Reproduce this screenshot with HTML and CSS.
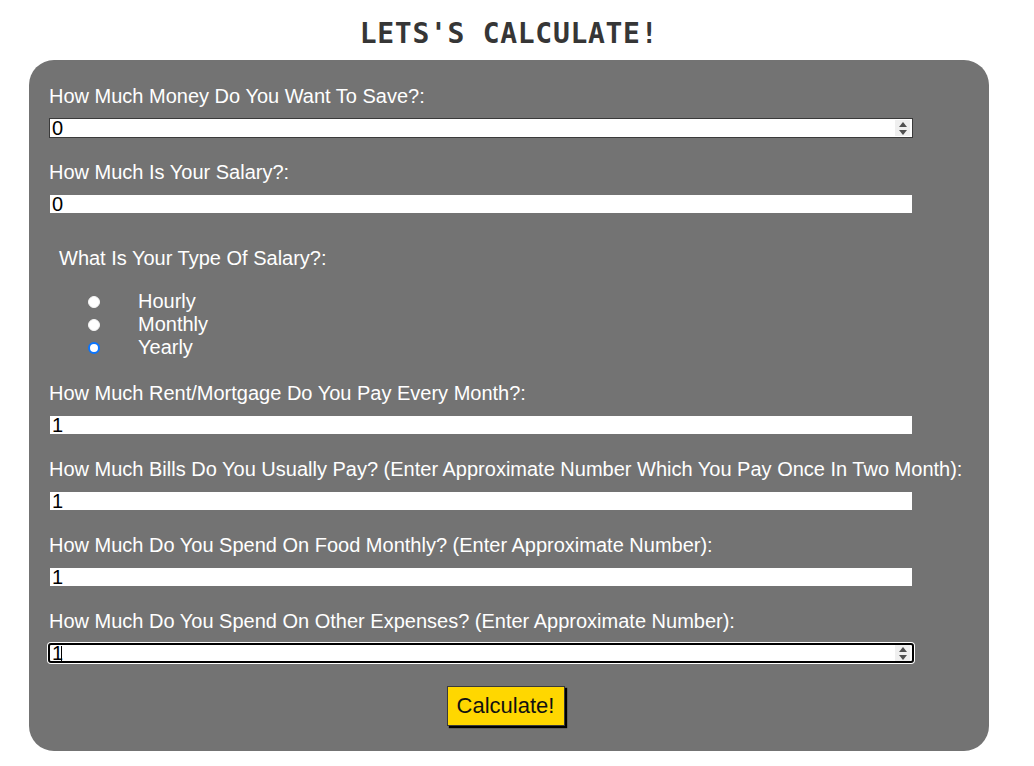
FILE: index.html
```html
<!DOCTYPE html>
<html lang="en">
<head>
<meta charset="utf-8">
<title>Lets's Calculate!</title>
<link rel="stylesheet" href="styles.css">
</head>
<body>
<div class="page">
  <h1 class="title">LETS'S CALCULATE!</h1>
  <form class="panel">
    <label class="field-label" for="save">How Much Money Do You Want To Save?:</label>
    <div class="input-wrap">
      <input class="field hovered" id="save" type="text" value="0">
      <span class="spinner"><span class="tri up"></span><span class="tri down"></span></span>
    </div>

    <label class="field-label" for="salary">How Much Is Your Salary?:</label>
    <div class="input-wrap">
      <input class="field" id="salary" type="text" value="0">
    </div>

    <div class="radio-group">
      <p class="group-title">What Is Your Type Of Salary?:</p>
      <ul class="radio-list">
        <li><input class="radio" type="radio" name="type" id="hourly"><label for="hourly">Hourly</label></li>
        <li><input class="radio" type="radio" name="type" id="monthly"><label for="monthly">Monthly</label></li>
        <li><input class="radio" type="radio" name="type" id="yearly" checked><label for="yearly">Yearly</label></li>
      </ul>
    </div>

    <label class="field-label" for="rent">How Much Rent/Mortgage Do You Pay Every Month?:</label>
    <div class="input-wrap">
      <input class="field" id="rent" type="text" value="1">
    </div>

    <label class="field-label" for="bills">How Much Bills Do You Usually Pay? (Enter Approximate Number Which You Pay Once In Two Month):</label>
    <div class="input-wrap">
      <input class="field" id="bills" type="text" value="1">
    </div>

    <label class="field-label" for="food">How Much Do You Spend On Food Monthly? (Enter Approximate Number):</label>
    <div class="input-wrap">
      <input class="field" id="food" type="text" value="1">
    </div>

    <label class="field-label" for="other">How Much Do You Spend On Other Expenses? (Enter Approximate Number):</label>
    <div class="input-wrap last">
      <input class="field focused" id="other" type="text" value="1">
      <span class="caret"></span>
      <span class="spinner"><span class="tri up"></span><span class="tri down"></span></span>
    </div>

    <div class="actions">
      <button class="calc" type="button">Calculate!</button>
    </div>
  </form>
</div>
</body>
</html>
```

FILE: styles.css
```css
* { box-sizing: border-box; }

body {
  margin: 0;
  background: #ffffff;
  font-family: "Liberation Sans", Arial, sans-serif;
}

.page {
  width: 960px;
  margin-left: 29px;
}

.title {
  margin: 18px 0 10px;
  font-family: "DejaVu Sans Mono", monospace;
  font-weight: bold;
  font-size: 28px;
  line-height: 32px;
  letter-spacing: 0.7px;
  color: #363636;
  text-align: center;
}

.panel {
  background: #737373;
  border-radius: 25px;
  padding: 25px 20px 25px;
  display: flex;
  flex-direction: column;
  align-items: flex-start;
  color: #ffffff;
}

.field-label {
  font-size: 20px;
  line-height: 23px;
  white-space: nowrap;
}

.input-wrap {
  position: relative;
  width: 864px;
  height: 20px;
  margin: 10px 0 23px;
}

.input-wrap.last {
  margin-bottom: 23px;
}

.field {
  display: block;
  width: 100%;
  height: 20px;
  margin: 0;
  padding: 0 0 0 2px;
  border: 1px solid #737373;
  background: #ffffff;
  font-family: "Liberation Sans", Arial, sans-serif;
  font-size: 20px;
  line-height: 18px;
  color: #000000;
  outline: none;
}

.field.hovered {
  border-color: #3a3a3a;
}

.field.focused {
  border: 2px solid #000000;
  border-radius: 3px;
  box-shadow: 0 0 0 1px #ffffff;
  margin-left: -1px;
  width: 866px;
  padding-left: 2px;
}

.caret {
  position: absolute;
  left: 12px;
  top: 3px;
  width: 1px;
  height: 15px;
  background: #000000;
}

.spinner {
  position: absolute;
  right: 3px;
  top: 2px;
  width: 15px;
  height: 16px;
  background: #efefef;
  display: flex;
  flex-direction: column;
  align-items: center;
  justify-content: center;
  gap: 3px;
}

.tri {
  width: 0;
  height: 0;
  border-left: 4px solid transparent;
  border-right: 4px solid transparent;
}

.tri.up { border-bottom: 5px solid #505050; }
.tri.down { border-top: 5px solid #505050; }

.radio-group {
  margin: 10px 0 23px 10px;
}

.group-title {
  margin: 0 0 20px;
  font-size: 20px;
  line-height: 23px;
}

.radio-list {
  list-style: none;
  margin: 0;
  padding: 0 0 0 29px;
}

.radio-list li {
  display: flex;
  align-items: center;
  font-size: 20px;
  line-height: 23px;
}

.radio {
  appearance: none;
  -webkit-appearance: none;
  width: 12px;
  height: 12px;
  margin: 0 38px 0 0;
  border-radius: 50%;
  background: #ffffff;
  border: 1px solid #f4f4f4;
  flex: none;
}

.radio:checked {
  border: 2px solid #0a75ff;
  background: #ffffff;
}

.actions {
  align-self: stretch;
  display: flex;
  justify-content: center;
  padding-right: 7px;
}

.calc {
  width: 118px;
  height: 40px;
  padding: 0;
  background: #ffd700;
  border: 1px solid #3a3a3a;
  box-shadow: 2px 2px 1px #000000;
  font-family: "Liberation Sans", Arial, sans-serif;
  font-size: 22px;
  color: #111111;
}
```
